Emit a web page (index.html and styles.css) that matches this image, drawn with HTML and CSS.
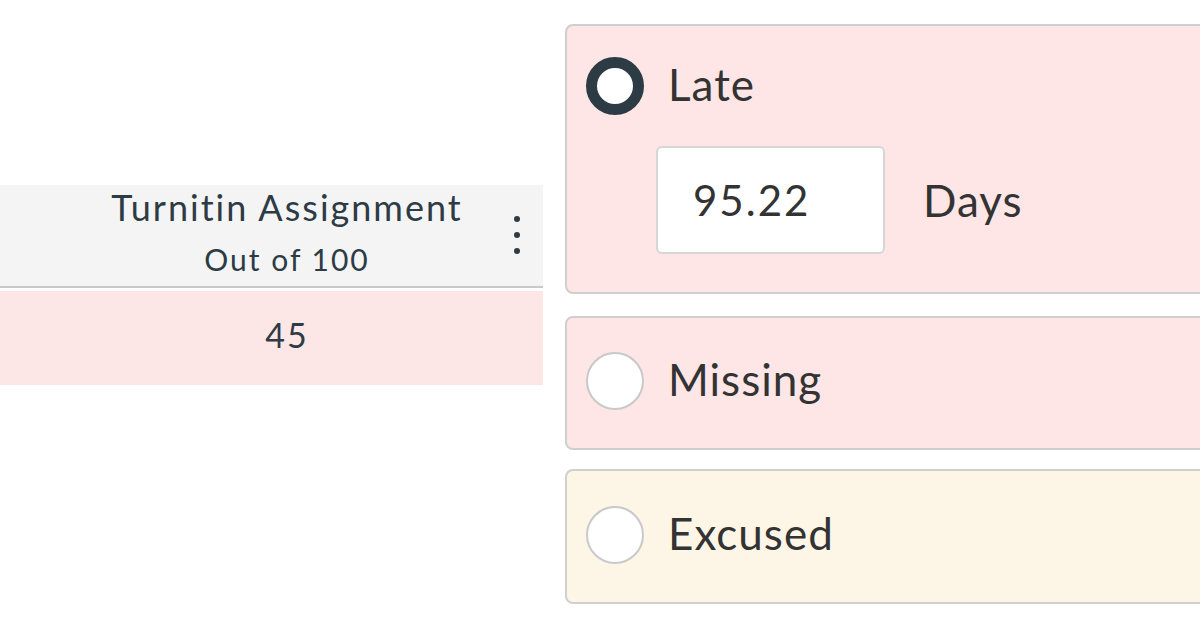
FILE: index.html
```
<!DOCTYPE html>
<html lang="en">
<head>
  <meta charset="UTF-8">
  <title>Gradebook status</title>
  <link rel="stylesheet" href="styles.css">
</head>
<body>
  <div class="page">
    <div class="grid-col">
      <div class="col-header">
        <div class="col-title">Turnitin Assignment</div>
        <div class="col-sub">Out of 100</div>
        <span class="col-menu"><i></i><i></i><i></i></span>
      </div>
      <div class="cell late-cell">45</div>
    </div>

    <div class="status-list">
      <div class="status late">
        <label class="option">
          <span class="radio checked"></span>
          <span class="label">Late</span>
        </label>
        <div class="days">
          <div class="days-input">95.22</div>
          <span class="label">Days</span>
        </div>
      </div>
      <div class="status missing">
        <label class="option">
          <span class="radio"></span>
          <span class="label">Missing</span>
        </label>
      </div>
      <div class="status excused">
        <label class="option">
          <span class="radio"></span>
          <span class="label">Excused</span>
        </label>
      </div>
    </div>
  </div>
</body>
</html>
```

FILE: styles.css
```
body {
  margin: 0;
  background: #fff;
  color: #2d3b45;
  font-family: Lato, 'Open Sans', sans-serif;
  overflow: hidden;
}
.page {
  display: flex;
  width: 1200px;
  height: 628px;
  overflow: hidden;
}
.grid-col {
  flex: none;
  width: 512px;
  margin-left: 31px;
  padding-top: 185px;
}
.col-header {
  position: relative;
  height: 101px;
  background: #f4f4f4;
  border-bottom: 2px solid #c7c9cb;
  text-align: center;
  margin-left: -31px;
  padding-left: 31px;
}
.col-title {
  font-size: 36px;
  letter-spacing: 2px;
  line-height: 40px;
  padding-top: 2px;
}
.col-sub {
  font-size: 30px;
  letter-spacing: 2px;
  line-height: 34px;
  margin-top: 15px;
}
.col-menu {
  position: absolute;
  right: 23px;
  top: 31px;
  display: flex;
  flex-direction: column;
  gap: 10px;
}
.col-menu i {
  display: block;
  width: 6px;
  height: 6px;
  border-radius: 50%;
  background: #2d3b45;
}
.cell {
  height: 94px;
  margin-top: 3px;
  margin-left: -31px;
  padding-left: 31px;
  text-align: center;
  font-size: 34px;
  letter-spacing: 2px;
  line-height: 88px;
}
.late-cell {
  background: #fde7e6;
}
.status-list {
  flex: none;
  margin-left: 22px;
  padding-top: 24px;
  display: flex;
  flex-direction: column;
  width: 700px;
}
.status {
  border: 2px solid #cfcfcf;
  border-radius: 8px;
  padding: 0 19px;
  box-sizing: border-box;
}
.late, .missing {
  background: #fde6e5;
}
.late {
  height: 270px;
  padding-top: 31px;
}
.missing {
  height: 134px;
  margin-top: 22px;
  padding-bottom: 4px;
  display: flex;
  align-items: center;
}
.excused {
  background: #fdf6e6;
  height: 135px;
  margin-top: 19px;
  padding-bottom: 3px;
  display: flex;
  align-items: center;
}
.option {
  display: flex;
  align-items: center;
  gap: 24px;
}
.option .label {
  margin-top: -4px;
}
.radio {
  width: 58px;
  height: 58px;
  box-sizing: border-box;
  border-radius: 50%;
  background: #fff;
  border: 2px solid #c9c9c9;
}
.radio.checked {
  border: 11px solid #2d3b45;
}
.label {
  font-size: 44px;
  letter-spacing: 1px;
  color: #333;
}
.days {
  display: flex;
  align-items: center;
  gap: 38px;
  margin-top: 31px;
  margin-left: 70px;
}
.days-input {
  width: 229px;
  height: 108px;
  box-sizing: border-box;
  background: #fff;
  border: 2px solid #d6d6d6;
  border-radius: 6px;
  padding-left: 35px;
  font-size: 42px;
  letter-spacing: 2px;
  line-height: 104px;
  color: #333;
}
```
